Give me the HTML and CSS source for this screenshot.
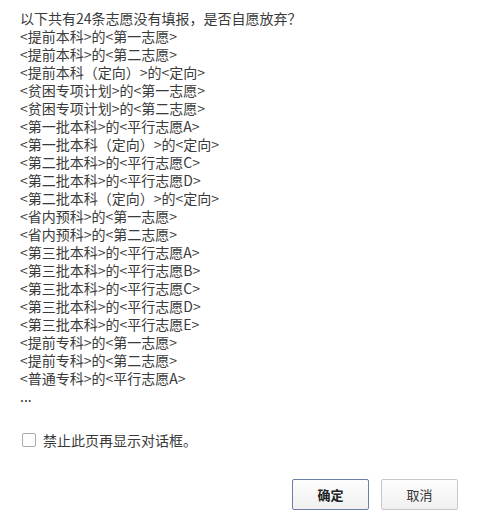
FILE: index.html
```html
<!DOCTYPE html>
<html lang="zh-CN">
<head>
<meta charset="utf-8">
<link rel="stylesheet" href="styles.css">
</head>
<body>
<div class="dialog">
  <div class="message">
    <div class="line">以下共有24条志愿没有填报，是否自愿放弃？</div>
    <div class="line">&lt;提前本科&gt;的&lt;第一志愿&gt;</div>
    <div class="line">&lt;提前本科&gt;的&lt;第二志愿&gt;</div>
    <div class="line">&lt;提前本科（定向）&gt;的&lt;定向&gt;</div>
    <div class="line">&lt;贫困专项计划&gt;的&lt;第一志愿&gt;</div>
    <div class="line">&lt;贫困专项计划&gt;的&lt;第二志愿&gt;</div>
    <div class="line">&lt;第一批本科&gt;的&lt;平行志愿A&gt;</div>
    <div class="line">&lt;第一批本科（定向）&gt;的&lt;定向&gt;</div>
    <div class="line">&lt;第二批本科&gt;的&lt;平行志愿C&gt;</div>
    <div class="line">&lt;第二批本科&gt;的&lt;平行志愿D&gt;</div>
    <div class="line">&lt;第二批本科（定向）&gt;的&lt;定向&gt;</div>
    <div class="line">&lt;省内预科&gt;的&lt;第一志愿&gt;</div>
    <div class="line">&lt;省内预科&gt;的&lt;第二志愿&gt;</div>
    <div class="line">&lt;第三批本科&gt;的&lt;平行志愿A&gt;</div>
    <div class="line">&lt;第三批本科&gt;的&lt;平行志愿B&gt;</div>
    <div class="line">&lt;第三批本科&gt;的&lt;平行志愿C&gt;</div>
    <div class="line">&lt;第三批本科&gt;的&lt;平行志愿D&gt;</div>
    <div class="line">&lt;第三批本科&gt;的&lt;平行志愿E&gt;</div>
    <div class="line">&lt;提前专科&gt;的&lt;第一志愿&gt;</div>
    <div class="line">&lt;提前专科&gt;的&lt;第二志愿&gt;</div>
    <div class="line">&lt;普通专科&gt;的&lt;平行志愿A&gt;</div>
    <div class="line">...</div>
  </div>
  <label class="check-row">
    <span class="box"></span>
    <span class="check-label">禁止此页再显示对话框。</span>
  </label>
  <div class="buttons">
    <button class="btn primary">确定</button>
    <button class="btn">取消</button>
  </div>
</div>
</body>
</html>
```
FILE: styles.css
```css
html, body {
  margin: 0;
  padding: 0;
  background: #ffffff;
}
body {
  font-family: "Noto Sans CJK SC", "Noto Sans", sans-serif;
  font-size: 14px;
  color: #3a3a3a;
}
.dialog {
  width: 477px;
  height: 521px;
  box-sizing: border-box;
  padding: 9px 19px 0 20px;
  display: flex;
  flex-direction: column;
}
.message {
  display: flex;
  flex-direction: column;
}
.line {
  line-height: 18px;
  height: 18px;
  white-space: nowrap;
}
.check-row {
  display: flex;
  align-items: center;
  gap: 7px;
  margin-top: 26px;
  padding-left: 2px;
  height: 18px;
}
.box {
  width: 14px;
  height: 14px;
  box-sizing: border-box;
  border: 1px solid #a9a9a9;
  border-radius: 2px;
  background: #fff;
}
.check-label {
  line-height: 18px;
}
.buttons {
  display: flex;
  justify-content: flex-end;
  gap: 12px;
  margin-top: 30px;
}
.btn {
  width: 77px;
  height: 31px;
  box-sizing: border-box;
  border: 1px solid #c9c9c9;
  border-radius: 2px;
  background: linear-gradient(#fdfdfd, #f0f0f0);
  font-family: "Noto Sans CJK SC", "Noto Sans", sans-serif;
  font-size: 13px;
  color: #333;
  padding: 0;
}
.btn.primary {
  border: 1px solid #6c7fa8;
  font-weight: bold;
  color: #222;
}
```
